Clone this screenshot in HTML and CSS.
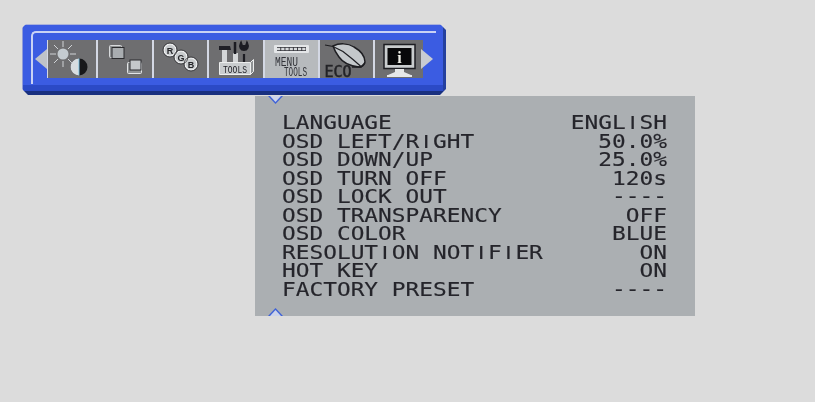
FILE: index.html
```html
<!DOCTYPE html>
<html lang="en">
<head>
<meta charset="utf-8">
<title>OSD Menu Tools</title>
<link rel="stylesheet" href="styles.css">
</head>
<body>
<div class="bar">
  <div class="frame">
    <span class="arrow arrow-left"></span>
    <div class="strip">
      <div class="tile t1">
        <svg width="48" height="38" viewBox="0 0 48 38">
          <g stroke="#d0d3d6" stroke-width="1"><path d="M15 1v6M15 21v6M2 14h6M22 14h6M6 5l4 4M20 19l4 4M24 5l-4 4M10 19l-4 4"/></g>
          <circle cx="15" cy="14" r="5.500" fill="#c4cbd0"/>
          <circle cx="31" cy="27" r="8.500" fill="#17171a"/>
          <path d="M31 18.500a8.500 8.500 0 0 0 0 17z" fill="#d8dde0"/>
          <path d="M31 18.500v17" stroke="#7cc0e0" stroke-width="1"/>
        </svg>
      </div>
      <div class="tile t2">
        <svg width="54" height="38" viewBox="0 0 54 38">
          <rect x="11.500" y="5.500" width="12" height="12" rx="1" fill="#8f9294" stroke="#d8dadc"/>
          <rect x="14" y="7.500" width="12" height="11" fill="#a9adb0" stroke="#2b2b2e"/>
          <rect x="29.500" y="22.500" width="14" height="11" rx="1" fill="#8f9294" stroke="#e2e4e6"/>
          <rect x="32" y="20" width="11" height="10" fill="#c4c8cb" stroke="#2b2b2e"/>
        </svg>
      </div>
      <div class="tile t3">
        <svg width="54" height="38" viewBox="0 0 54 38">
          <g fill="#c9ccce" stroke="#ecedee" stroke-width="1.500">
            <circle cx="16" cy="10" r="6"/><circle cx="27" cy="17" r="6"/><circle cx="37" cy="24" r="6"/>
          </g>
          <g fill="none" stroke="#2b2b2e" stroke-width=".8">
            <circle cx="16" cy="10" r="7"/><circle cx="27" cy="17" r="7"/><circle cx="37" cy="24" r="7"/>
          </g>
          <g class="rgb-text">
            <text x="16" y="13.500">R</text><text x="27" y="20.500">G</text><text x="37" y="27.500">B</text>
          </g>
        </svg>
      </div>
      <div class="tile t4">
        <svg width="54" height="38" viewBox="0 0 54 38">
          <path d="M10 6h11l1 4h-4v12h-5V10h-3z" fill="#1f1f26"/>
          <path d="M13 10h5v12h-5z" fill="#d4d6d8"/>
          <path d="M24 13h5v10h-5z" fill="#d4d6d8"/>
          <path d="M26 2v12" stroke="#1c1c22" stroke-width="2.500"/>
          <path d="M35 14v9M32 3c-2 4 0 7 3 7s5-3 3-7l-1 3h-4z" fill="#1c1c22" stroke="#1c1c22" stroke-width="2.200"/>
          <path d="M10.500 22.500h31v12h-31z" fill="#c9ccce" stroke="#eceded"/>
          <path d="M41.500 22.500l3-3v12l-3 3z" fill="#8f9294" stroke="#eceded"/>
          <text class="tools-text" x="14" y="32.500" textLength="24" lengthAdjust="spacingAndGlyphs">TOOLS</text>
        </svg>
      </div>
      <div class="tile t5">
        <svg width="53" height="38" viewBox="0 0 53 38">
          <rect x="9" y="5" width="35" height="8" rx="1" fill="#e4e6e8"/>
          <path d="M12 9h29" fill="none" stroke="#2f2f36" stroke-width="4"/>
          <path d="M12 9h29" fill="none" stroke="#d8dadc" stroke-width="2.400" stroke-dasharray="3.300 .9"/>
          <text class="menu-text" x="10" y="26" textLength="23" lengthAdjust="spacingAndGlyphs">MENU</text>
          <text class="menu-text" x="19" y="36" textLength="23" lengthAdjust="spacingAndGlyphs">TOOLS</text>
        </svg>
      </div>
      <div class="tile t6">
        <svg width="53" height="38" viewBox="0 0 53 38">
          <path d="M13 6c6-3 15-3 21 1 7 4 11 10 11 15-1 3-3 5-6 5-9-1-16-4-20-10-3-4-5-8-6-11z" fill="#c4c8cb" stroke="#1e1e22" stroke-width="1.500"/>
          <path d="M5 5l8 1.500 10 5 10 8 8 7" fill="none" stroke="#1e1e22" stroke-width="1.200"/>
          <path d="M32 27h9l4-4" fill="none" stroke="#1e1e22" stroke-width="1.500"/>
          <text class="eco-text" x="4.500" y="36.500">ECO</text>
        </svg>
      </div>
      <div class="tile t7">
        <svg width="48" height="38" viewBox="0 0 48 38">
          <rect x="9" y="4.500" width="31" height="24" fill="#c9ccce" stroke="#1d1d22" stroke-width="1.500"/>
          <rect x="12.500" y="8" width="24" height="17" fill="#08080a"/>
          <text class="info-text" x="24.500" y="23">i</text>
          <path d="M20 29h9v3l7 3H13l7-3z" fill="#e6e7e8"/>
          <path d="M12 36h25" stroke="#e6e7e8" stroke-width="2"/>
        </svg>
      </div>
    </div>
    <span class="arrow arrow-right"></span>
  </div>
</div>

<div class="panel">
  <span class="mark mark-top"></span>
  <ul class="rows">
    <li><span>LANGUAGE</span><span>ENGL<b>I</b>SH</span></li>
    <li><span>OSD LEFT/R<b>I</b>GHT</span><span>50.0%</span></li>
    <li><span>OSD DOWN/UP</span><span>25.0%</span></li>
    <li><span>OSD TURN OFF</span><span>120s</span></li>
    <li><span>OSD LOCK OUT</span><span>----</span></li>
    <li><span>OSD TRANSPARENCY</span><span>OFF</span></li>
    <li><span>OSD COLOR</span><span>BLUE</span></li>
    <li><span>RESOLUT<b>I</b>ON NOT<b>I</b>F<b>I</b>ER</span><span>ON</span></li>
    <li><span>HOT KEY</span><span>ON</span></li>
    <li><span>FACTORY PRESET</span><span>----</span></li>
  </ul>
  <span class="mark mark-bottom"></span>
</div>
</body>
</html>
```
FILE: styles.css
```css
html, body { margin: 0; height: 100%; }
body {
  box-sizing: border-box;
  height: 402px;
  overflow: hidden;
  padding: 24px 0 0 22px;
  background: #dcdcdc;
}
.bar {
  box-sizing: border-box;
  width: 424px;
  height: 71px;
  padding: 7px 0 0 9px;
  background: linear-gradient(to bottom, #a9b1dc 0 1px, #3b5ce2 1px 61px, #2b4ac6 61px 67px, #19307f 67px);
  box-shadow: inset -3px 0 0 #24409f, inset 1px 0 0 #8f9bd8;
  clip-path: polygon(4px 0, calc(100% - 6px) 0, 100% 6px, 100% calc(100% - 6px), calc(100% - 6px) 100%, 6px 100%, 0 calc(100% - 6px), 0 4px);
  filter: blur(.35px);
}
.frame {
  box-sizing: border-box;
  display: flex;
  align-items: center;
  width: 405px;
  height: 53px;
  padding: 7px 0 6px 2px;
  border-top: 2px solid #c9d2f4;
  border-left: 2px solid #c9d2f4;
  border-top-left-radius: 5px;
}
.arrow { width: 0; height: 0; border-style: solid; flex: none; }
.arrow-left { border-width: 10px 12px 10px 0; border-color: transparent #bfc3c9 transparent transparent; }
.arrow-right { border-width: 10px 0 10px 12px; border-color: transparent transparent transparent #c9ccd2; }
.strip {
  display: flex;
  gap: 2px;
  height: 38px;
  padding-left: 1px;
  background: #d4d8e4;
  flex: none;
  width: 374px;
  box-sizing: border-box;
}
.tile { flex: none; height: 38px; background: #6e6e70; }
.tile svg { display: block; overflow: visible; }
.t1, .t7 { width: 48px; }
.t2, .t3, .t4 { width: 53.500px; }
.t5 { width: 53px; background: #b7babd; }
.t6 { width: 53px; }
.rgb-text text { font: 700 9px "Liberation Sans", sans-serif; fill: #26262a; text-anchor: middle; }
.tools-text { font: 11px "Liberation Mono", monospace; fill: #1e1e24; }
.menu-text { font: 12px "Liberation Mono", monospace; fill: #33343a; }
.eco-text { font: 15px "DejaVu Sans Mono", monospace; fill: #232327; stroke: #232327; stroke-width: .5px; }
.info-text { font: 700 16px "Liberation Serif", serif; fill: #f0f0e8; text-anchor: middle; }

.panel {
  position: relative;
  box-sizing: border-box;
  width: 440px;
  height: 220px;
  margin: 1px 0 0 233px;
  padding: 17px 0 0 27px;
  background: #abafb2;
}
.rows {
  width: 320.800px;
  margin: 0;
  padding: 0;
  list-style: none;
  font: 19px/18.550px "DejaVu Sans Mono", monospace;
  color: #25252b;
  -webkit-text-stroke: .15px #25252b;
  transform: scaleX(1.2);
  transform-origin: left top;
  filter: blur(.3px);
}
.rows li { display: flex; justify-content: space-between; height: 18.550px; white-space: pre; }
.rows b {
  display: inline-block;
  width: 11.440px;
  font: 19px/18.550px "Liberation Sans", sans-serif;
  text-align: center;
}
.mark {
  position: absolute;
  left: 13px;
  width: 15px;
  height: 8px;
  background: #3f62d8;
}
.mark::after {
  content: "";
  position: absolute;
  left: 2px;
  width: 11px;
  height: 6px;
  background: #cdd4ea;
}
.mark-top { top: 0; clip-path: polygon(0 0, 100% 0, 50% 100%); }
.mark-top::after { top: 0; clip-path: polygon(0 0, 100% 0, 50% 100%); }
.mark-bottom { bottom: 0; clip-path: polygon(50% 0, 100% 100%, 0 100%); }
.mark-bottom::after { bottom: 0; clip-path: polygon(50% 0, 100% 100%, 0 100%); }
```
